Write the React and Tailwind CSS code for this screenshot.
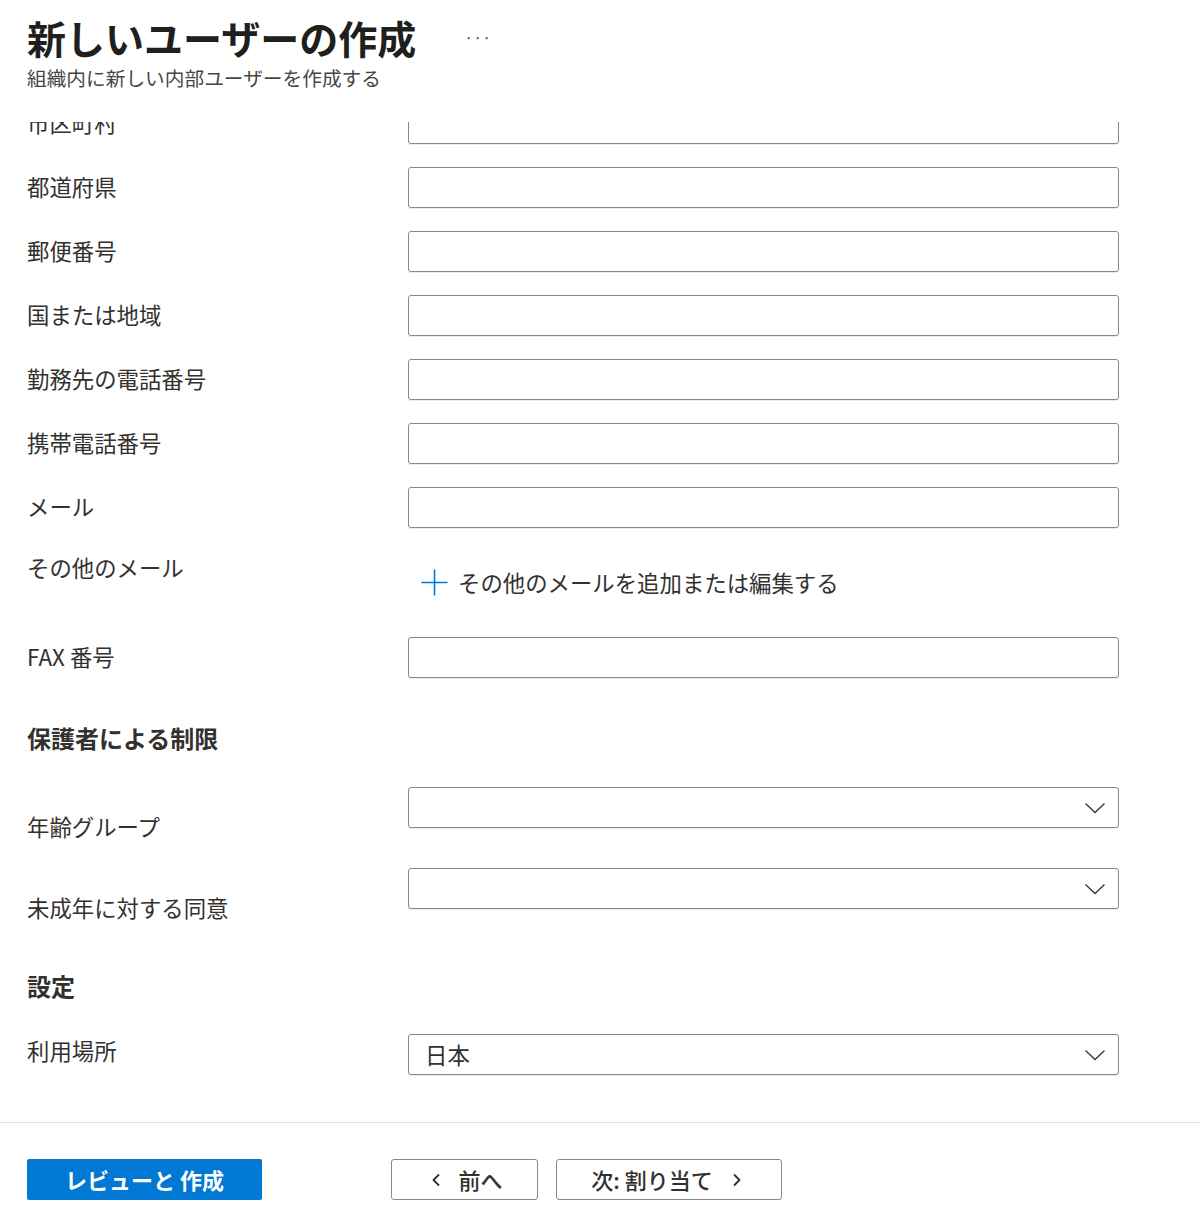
import { ChevronLeft, ChevronRight } from 'lucide-react'

const FONT = { fontFamily: '"Noto Sans CJK JP", "Noto Sans", sans-serif' }

const TEXT_ROWS = ['都道府県', '郵便番号', '国または地域', '勤務先の電話番号', '携帯電話番号', 'メール']

function TextBox() {
  return <div className="w-[711px] h-[41px] border border-[#8a8886] rounded-[3px] bg-white shadow-[0_1px_0_rgba(0,0,0,0.08)]" />
}

function Select({ value }) {
  return (
    <div className="w-[711px] h-[41px] border border-[#8a8886] rounded-[3px] bg-white flex items-center justify-between pl-[16px] pr-[12px] shadow-[0_1px_0_rgba(0,0,0,0.08)]">
      <span className="text-[22.4px] leading-none text-[#323130]">{value}</span>
      <svg width="22" height="12" viewBox="0 0 22 12" fill="none">
        <path d="M1.5 1.5 L11 10.5 L20.5 1.5" stroke="#3b3a39" strokeWidth="1.4" />
      </svg>
    </div>
  )
}

function Label({ children, className = '' }) {
  return <div className={`w-[381px] shrink-0 text-[22.4px] leading-[32px] text-[#323130] ${className}`}>{children}</div>
}

export default function App() {
  return (
    <div className="w-[1200px] h-[1223px] bg-white flex flex-col overflow-hidden" style={FONT}>
      {/* Header */}
      <div className="px-[27px] pt-[11px] shrink-0">
        <div className="flex items-center">
          <h1 className="text-[39px] leading-[52px] font-bold text-[#201f1e]">新しいユーザーの作成</h1>
          <span className="ml-[48px] text-[16px] text-[#605e5c]">···</span>
        </div>
        <p className="mt-[1px] text-[19.7px] leading-[28px] text-[#484644]">組織内に新しい内部ユーザーを作成する</p>
      </div>

      {/* Scroll area, scrolled part way down */}
      <div className="mt-[30px] flex-1 overflow-hidden border-b border-[#e1dfdd]">
        <div className="-mt-[19px] px-[27px] flex flex-col">
          <div className="flex items-center h-[41px]">
            <Label className="pb-[3px]">市区町村</Label>
            <TextBox />
          </div>

          {TEXT_ROWS.map(l => (
            <div key={l} className="flex items-center h-[41px] mt-[23px]">
              <Label className="pb-[3px]">{l}</Label>
              <TextBox />
            </div>
          ))}

          <div className="flex items-start h-[63px] mt-[23px]">
            <Label>その他のメール</Label>
            <div className="pt-[15px] pl-[13px] flex items-center gap-[10px] text-[22.4px] leading-[32px] text-[#323130]">
              <svg width="27" height="27" viewBox="0 0 27 27" fill="none">
                <path d="M13.5 0.5 V26.5 M0.5 13.5 H26.5" stroke="#0078d4" strokeWidth="1.6" />
              </svg>
              <span>その他のメールを追加または編集する</span>
            </div>
          </div>

          <div className="flex items-center h-[41px] mt-[23px]">
            <Label className="pb-[3px]">FAX 番号</Label>
            <TextBox />
          </div>

          <h2 className="mt-[44px] text-[24px] leading-[32px] font-bold text-[#323130]">保護者による制限</h2>

          <div className="flex items-start mt-[33px]">
            <Label className="pt-[23px]">年齢グループ</Label>
            <Select />
          </div>

          <div className="flex items-start mt-[26px]">
            <Label className="pt-[23px]">未成年に対する同意</Label>
            <Select />
          </div>

          <h2 className="mt-[47px] text-[24px] leading-[32px] font-bold text-[#323130]">設定</h2>

          <div className="flex items-start mt-[32px]">
            <Label>利用場所</Label>
            <Select value="日本" />
          </div>
        </div>
      </div>

      {/* Footer */}
      <div className="shrink-0 h-[100px] px-[27px] pt-[36px] flex items-start">
        <button type="button" className="w-[235px] h-[41px] rounded-[2px] bg-[#0078d4] text-white text-[22px] font-bold">
          レビューと 作成
        </button>
        <button type="button" className="ml-[129px] w-[147px] h-[41px] rounded-[3px] border border-[#8a8886] bg-white text-[#323130] text-[22px] font-medium flex items-center justify-center gap-[12px]">
          <ChevronLeft className="w-[20px] h-[20px]" strokeWidth={2.2} />
          <span>前へ</span>
        </button>
        <button type="button" className="ml-[18px] w-[226px] h-[41px] rounded-[3px] border border-[#8a8886] bg-white text-[#323130] text-[22px] font-medium flex items-center justify-center gap-[14px]">
          <span>次: 割り当て</span>
          <ChevronRight className="w-[20px] h-[20px]" strokeWidth={2.2} />
        </button>
      </div>
    </div>
  )
}
